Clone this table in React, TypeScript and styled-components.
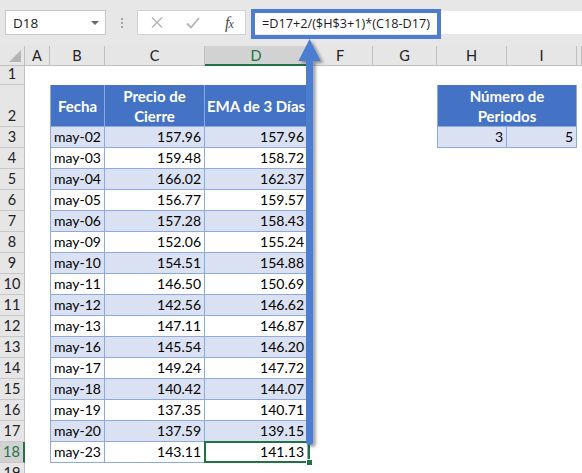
import React from 'react';
import styled, { createGlobalStyle } from 'styled-components';

const BLUE = '#4472c4';
const LINE = '#8eaadb';
const BAND = '#d9e1f2';
const GREEN = '#217346';
const ARROW = '#4b7dd1';
const HEAD_BG = '#e6e6e6';
const HEAD_LINE = '#bfbfbf';

const GlobalStyle = createGlobalStyle`
  html, body { margin: 0; padding: 0; background: #ffffff; }
  #root { width: 582px; height: 473px; }
`;

const Page = styled.div`
  position: relative;
  width: 582px;
  height: 473px;
  overflow: hidden;
  background: #ffffff;
  font-family: Lato, "Noto Sans", sans-serif;
`;

const Toolbar = styled.div`
  display: flex;
  align-items: flex-start;
  height: 46px;
  box-sizing: border-box;
  padding: 10px 0 0 5px;
  background: #e7e7e7;
  font-family: "Open Sans", "Noto Sans", sans-serif;
`;

const NameBox = styled.div`
  display: flex;
  align-items: center;
  box-sizing: border-box;
  width: 101px;
  height: 25px;
  padding: 0 6px 0 7px;
  background: #ffffff;
  border: 1px solid #c6c6c6;
  font-size: 13.5px;
  color: #222222;
`;

const Caret = styled.span`
  margin-left: auto;
  width: 0;
  height: 0;
  border-left: 4px solid transparent;
  border-right: 4px solid transparent;
  border-top: 4px solid #6b6b6b;
`;

const Grip = styled.div`
  display: flex;
  flex-direction: column;
  align-items: center;
  justify-content: center;
  gap: 2px;
  width: 31px;
  height: 25px;
`;

const GripDot = styled.span`
  width: 2px;
  height: 2px;
  background: #a2a2a2;
`;

const ButtonBox = styled.div`
  display: grid;
  grid-template-columns: repeat(3, 36px);
  align-items: center;
  justify-items: center;
  box-sizing: border-box;
  width: 109px;
  height: 25px;
  padding-left: 1px;
  margin-right: 5px;
  background: #ffffff;
  border: 1px solid #d2d2d2;
`;

const Fx = styled.span`
  font-family: "Liberation Serif", "DejaVu Serif", serif;
  font-style: italic;
  font-size: 16px;
  color: #4a4a4a;
  letter-spacing: -1px;
  small {
    font-size: 12px;
  }
`;

const FormulaBar = styled.div`
  position: relative;
  flex: 1;
  height: 23px;
  margin-top: 1px;
  display: flex;
  align-items: center;
  padding-left: 11px;
  background: #ffffff;
  font-size: 12.7px;
  color: #1c1c1c;
  white-space: nowrap;
`;

const FormulaHighlight = styled.div`
  position: absolute;
  left: 0;
  top: -2px;
  width: 190px;
  height: 30px;
  box-sizing: border-box;
  border: 4px solid ${ARROW};
`;

const Sheet = styled.div`
  display: grid;
  grid-template-columns: 25px 25px 55px 100px 103px 65px 64px 70px 70px 1fr;
  grid-template-rows: 20px 19px 42px repeat(17, 21px);
  font-size: 14px;
  color: #000000;
`;

const Corner = styled.div`
  display: flex;
  align-items: flex-end;
  justify-content: flex-end;
  box-sizing: border-box;
  padding: 0 3px 3px 0;
  background: ${HEAD_BG};
  border-right: 1px solid ${HEAD_LINE};
  border-bottom: 1px solid ${HEAD_LINE};
`;

const ColHeader = styled.div<{ $active?: boolean }>`
  display: flex;
  align-items: center;
  justify-content: center;
  box-sizing: border-box;
  padding-top: ${(p) => (p.$active ? '1px' : '0')};
  background: ${(p) => (p.$active ? '#d2d2d2' : HEAD_BG)};
  border-right: 1px solid ${HEAD_LINE};
  border-bottom: ${(p) => (p.$active ? `2px solid ${GREEN}` : `1px solid ${HEAD_LINE}`)};
  color: ${(p) => (p.$active ? GREEN : '#222222')};
  font-size: 14.5px;
`;

const RowHeader = styled.div<{ $active?: boolean }>`
  display: flex;
  align-items: flex-end;
  justify-content: center;
  box-sizing: border-box;
  padding-bottom: 1px;
  line-height: 18px;
  font-size: 14.5px;
  background: ${(p) => (p.$active ? '#d2d2d2' : HEAD_BG)};
  border-right: ${(p) => (p.$active ? `2px solid ${GREEN}` : `1px solid ${HEAD_LINE}`)};
  border-bottom: 1px solid #c8c8c8;
  color: ${(p) => (p.$active ? GREEN : '#222222')};
`;

const Blank = styled.div`
  background: #ffffff;
`;

const TableHead = styled.div<{ $span?: number; $first?: boolean }>`
  grid-column: span ${(p) => p.$span ?? 1};
  display: flex;
  align-items: center;
  justify-content: center;
  box-sizing: border-box;
  padding: 0 1px;
  background: ${BLUE};
  border-right: 1px solid ${LINE};
  border-bottom: 1px solid ${LINE};
  border-left: ${(p) => (p.$first ? `1px solid ${LINE}` : 'none')};
  color: #ffffff;
  font-weight: 700;
  font-size: 15px;
  line-height: 20px;
  text-align: center;
  white-space: nowrap;
  overflow: hidden;
`;

const DataCell = styled.div<{ $band?: boolean; $first?: boolean }>`
  position: relative;
  display: flex;
  align-items: flex-end;
  justify-content: flex-end;
  box-sizing: border-box;
  padding: 0 3px 1px 0;
  line-height: 18px;
  background: ${(p) => (p.$band ? BAND : '#ffffff')};
  border-right: 1px solid ${LINE};
  border-bottom: 1px solid ${LINE};
  border-left: ${(p) => (p.$first ? `1px solid ${LINE}` : 'none')};
`;

const Selection = styled.div`
  position: absolute;
  left: -1px;
  top: -1px;
  right: -3px;
  bottom: -1px;
  border: 2px solid ${GREEN};
  pointer-events: none;
`;

const FillHandle = styled.div`
  position: absolute;
  right: -5px;
  bottom: -5px;
  width: 5px;
  height: 5px;
  background: ${GREEN};
  border: 1px solid #ffffff;
`;

const ArrowLayer = styled.svg`
  position: absolute;
  left: 0;
  top: 0;
  width: 582px;
  height: 473px;
  pointer-events: none;
`;

const rows: [string, string, string][] = [
  ['may-02', '157.96', '157.96'],
  ['may-03', '159.48', '158.72'],
  ['may-04', '166.02', '162.37'],
  ['may-05', '156.77', '159.57'],
  ['may-06', '157.28', '158.43'],
  ['may-09', '152.06', '155.24'],
  ['may-10', '154.51', '154.88'],
  ['may-11', '146.50', '150.69'],
  ['may-12', '142.56', '146.62'],
  ['may-13', '147.11', '146.87'],
  ['may-16', '145.54', '146.20'],
  ['may-17', '149.24', '147.72'],
  ['may-18', '140.42', '144.07'],
  ['may-19', '137.35', '140.71'],
  ['may-20', '137.59', '139.15'],
  ['may-23', '143.11', '141.13'],
];

const columns = ['A', 'B', 'C', 'D', 'F', 'G', 'H', 'I', ''];

export default function App() {
  return (
    <Page>
      <GlobalStyle />
      <Toolbar>
        <NameBox>
          D18
          <Caret />
        </NameBox>
        <Grip>
          <GripDot />
          <GripDot />
          <GripDot />
        </Grip>
        <ButtonBox>
          <svg width="12" height="11" viewBox="0 0 12 11">
            <path d="M1 0.5 L11 10.5 M11 0.5 L1 10.5" stroke="#b4b4b4" strokeWidth="1.4" fill="none" />
          </svg>
          <svg width="14" height="12" viewBox="0 0 14 12">
            <path d="M1 6.5 L5 10.5 L13 1" stroke="#b4b4b4" strokeWidth="1.8" fill="none" />
          </svg>
          <Fx>
            f<small>x</small>
          </Fx>
        </ButtonBox>
        <FormulaBar>
          <FormulaHighlight />
          =D17+2/($H$3+1)*(C18-D17)
        </FormulaBar>
      </Toolbar>

      <Sheet>
        <Corner>
          <svg width="12" height="12" viewBox="0 0 12 12">
            <path d="M12 0 L12 12 L0 12 Z" fill="#b5b5b5" />
          </svg>
        </Corner>
        {columns.map((c, i) => (
          <ColHeader key={'h' + i} $active={c === 'D'}>
            {c}
          </ColHeader>
        ))}

        {/* row 1 */}
        <RowHeader>1</RowHeader>
        {columns.map((_, i) => (
          <Blank key={'r1' + i} />
        ))}

        {/* row 2 */}
        <RowHeader>2</RowHeader>
        <Blank />
        <TableHead $first>Fecha</TableHead>
        <TableHead>
          Precio de
          <br />
          Cierre
        </TableHead>
        <TableHead>EMA de 3 Días</TableHead>
        <Blank />
        <Blank />
        <TableHead $span={2} $first>
          Número de
          <br />
          Periodos
        </TableHead>
        <Blank />

        {rows.map(([date, price, ema], i) => {
          const rowNo = i + 3;
          const band = i % 2 === 0;
          const selected = rowNo === 18;
          return (
            <React.Fragment key={rowNo}>
              <RowHeader $active={selected}>{rowNo}</RowHeader>
              <Blank />
              <DataCell $band={band} $first>
                {date}
              </DataCell>
              <DataCell $band={band}>{price}</DataCell>
              <DataCell $band={band}>
                {ema}
                {selected && (
                  <Selection>
                    <FillHandle />
                  </Selection>
                )}
              </DataCell>
              <Blank />
              <Blank />
              {rowNo === 3 ? (
                <>
                  <DataCell $band $first>
                    3
                  </DataCell>
                  <DataCell $band>5</DataCell>
                </>
              ) : (
                <>
                  <Blank />
                  <Blank />
                </>
              )}
              <Blank />
            </React.Fragment>
          );
        })}

        <RowHeader>19</RowHeader>
        {columns.map((_, i) => (
          <Blank key={'r19' + i} />
        ))}
      </Sheet>

      <ArrowLayer viewBox="0 0 582 473">
        <defs>
          <filter id="arrowShadow" x="-50%" y="-5%" width="200%" height="110%">
            <feDropShadow dx="2.5" dy="2" stdDeviation="1.6" floodColor="#000000" floodOpacity="0.38" />
          </filter>
        </defs>
        <path
          d="M309.6 39 L320.8 61 L313.2 61 L313.2 441.5 A3.6 3.6 0 0 1 306 441.5 L306 61 L298.4 61 Z"
          fill={ARROW}
          filter="url(#arrowShadow)"
        />
      </ArrowLayer>
    </Page>
  );
}
